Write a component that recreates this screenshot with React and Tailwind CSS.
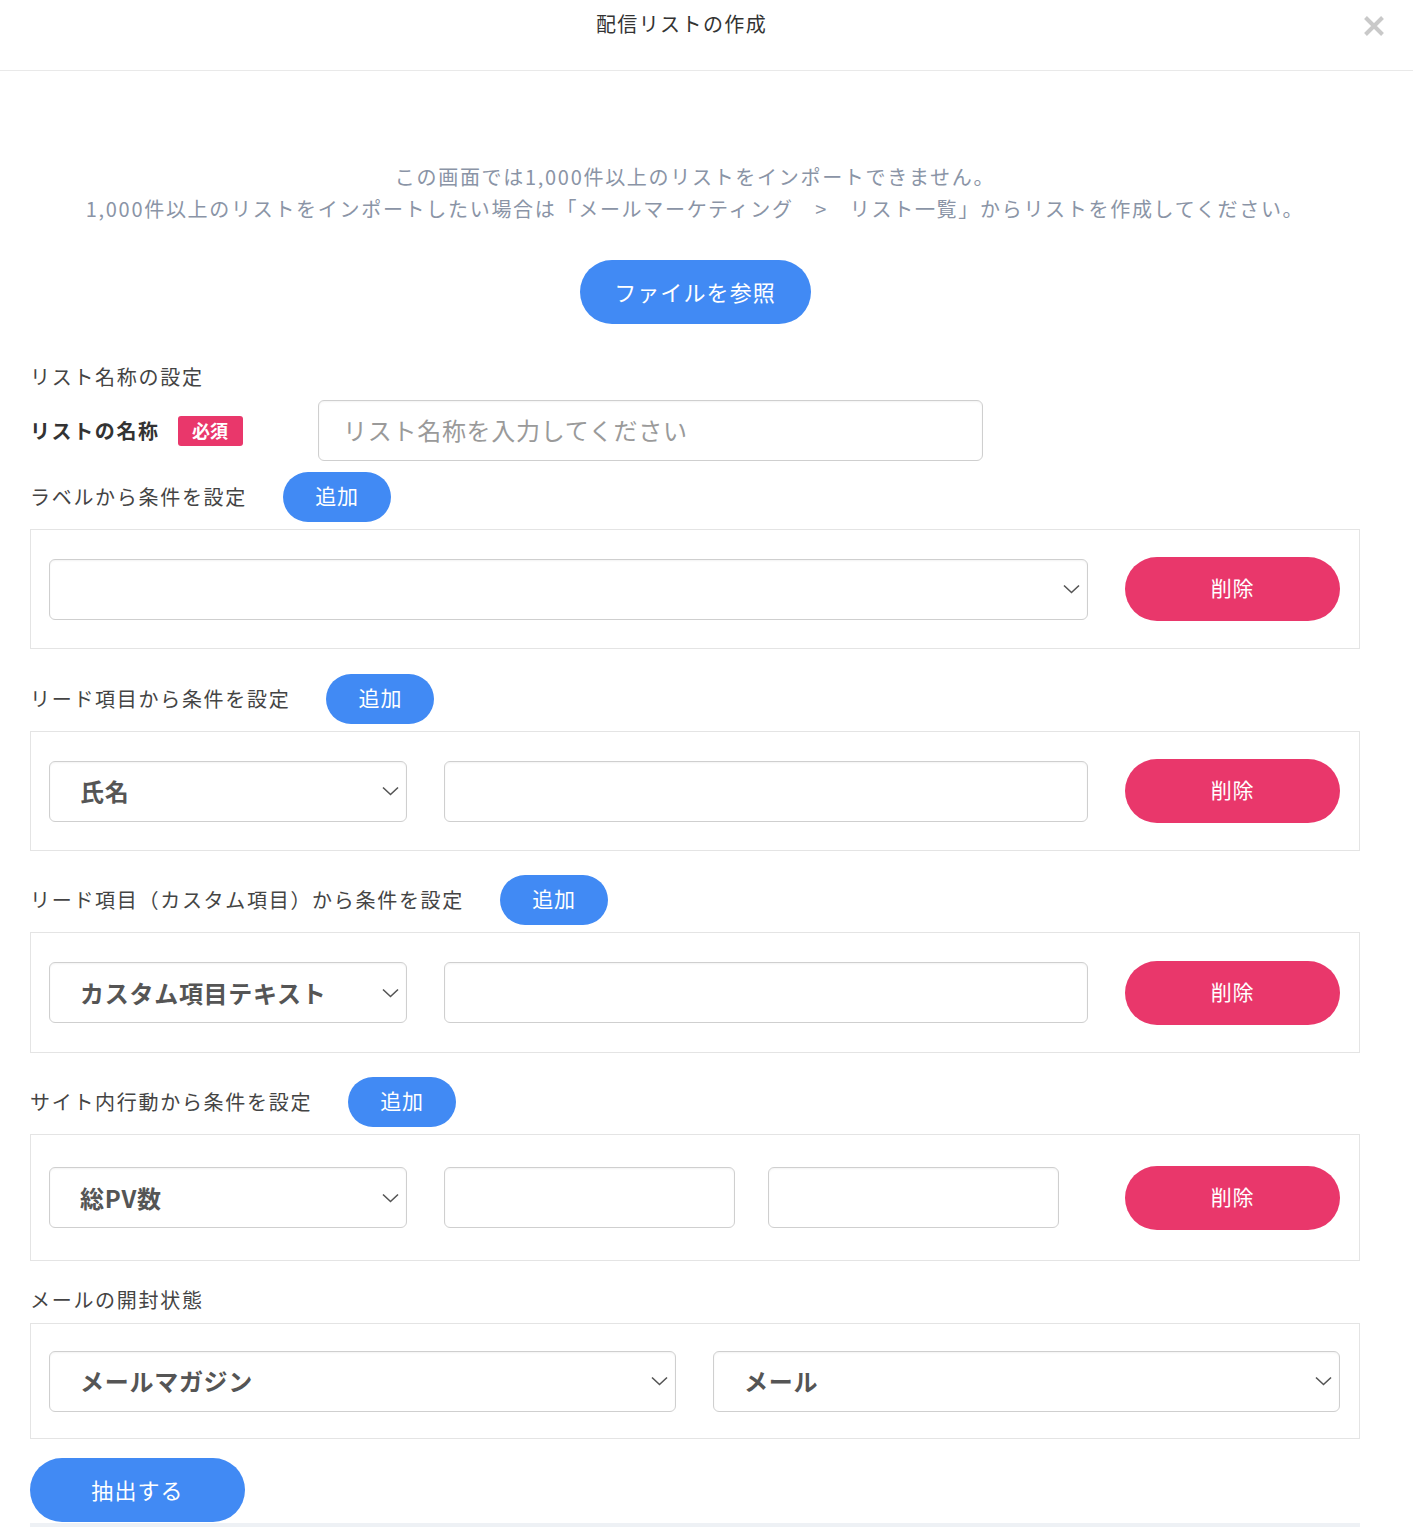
import React from "react";

const font = { fontFamily: '"Noto Sans CJK JP", "Noto Sans", sans-serif' };

// Dropdown chevron drawn as a thin V
function Chevron() {
  return (
    <svg width="17" height="10" viewBox="0 0 17 10" fill="none">
      <path d="M1 1.5 L8.5 8.5 L16 1.5" stroke="#555" strokeWidth="1.6" />
    </svg>
  );
}

function Select({ value, className = "" }) {
  return (
    <div className={"relative h-[61px] " + className}>
      <select
        defaultValue={value}
        className="h-full w-full appearance-none rounded-[6px] border border-[#cfcfcf] bg-white pl-[30px] pr-10 text-[24px] font-bold tracking-[0.03em] text-[#555] outline-none shadow-[inset_0_1px_2px_rgba(0,0,0,0.05)]"
        style={font}
      >
        <option value={value}>{value}</option>
      </select>
      <span className="pointer-events-none absolute right-[8px] top-1/2 -translate-y-1/2">
        <Chevron />
      </span>
    </div>
  );
}

function TextBox({ className = "" }) {
  return (
    <input
      type="text"
      className={
        "h-[61px] rounded-[6px] border border-[#cfcfcf] bg-white px-6 text-[22px] text-[#555] outline-none shadow-[inset_0_1px_2px_rgba(0,0,0,0.05)] " +
        className
      }
      style={font}
    />
  );
}

function AddButton() {
  return (
    <button className="h-[50px] w-[108px] rounded-full bg-[#418af4] pb-[2px] text-[21px] tracking-[0.04em] text-white">
      追加
    </button>
  );
}

function DeleteButton() {
  return (
    <button className="ml-auto h-[64px] w-[215px] shrink-0 rounded-full bg-[#e9376b] pb-[2px] text-[21px] tracking-[0.04em] text-white">
      削除
    </button>
  );
}

function SectionLabel({ children, withAdd = true }) {
  return (
    <div className="flex items-center gap-[36px]">
      <div className="text-[20px] leading-[32px] tracking-[0.085em] text-[#444]">{children}</div>
      {withAdd && <AddButton />}
    </div>
  );
}

function Panel({ children, height = "h-[120px]" }) {
  return (
    <div className={"mt-[7px] flex items-center gap-[37px] border border-[#e4e4e4] pl-[18px] pr-[19px] " + height}>
      {children}
    </div>
  );
}

export default function App() {
  return (
    <div className="min-h-screen bg-white" style={font}>
      {/* header */}
      <div className="flex h-[71px] items-start border-b border-[#e9e9e9]">
        <div className="flex-1 pt-[9px] text-center text-[20px] leading-[30px] tracking-[0.07em] text-[#333]">
          配信リストの作成
        </div>
        <button className="mr-[28px] mt-[15px] h-[22px] w-[22px]">
          <svg width="22" height="22" viewBox="0 0 22 22">
            <path d="M2.5 2.5 L19.5 19.5 M19.5 2.5 L2.5 19.5" stroke="#c9c9c9" strokeWidth="4" />
          </svg>
        </button>
      </div>

      <div className="pl-[30px] pr-[53px]">
        <div className="mt-[90px] text-center text-[20px] leading-[32px] tracking-[0.085em] text-[#8a94a6]">
          <p>この画面では1,000件以上のリストをインポートできません。</p>
          <p>
            1,000件以上のリストをインポートしたい場合は「メールマーケティング　&gt;　リスト一覧」からリストを作成してください。
          </p>
        </div>

        <div className="mt-[35px] flex justify-center">
          <button className="h-[64px] w-[231px] rounded-full bg-[#418af4] pb-[2px] text-[22px] tracking-[0.05em] text-white">
            ファイルを参照
          </button>
        </div>

        {/* list name */}
        <div className="mt-[37px] text-[20px] leading-[32px] tracking-[0.085em] text-[#444]">リスト名称の設定</div>
        <div className="mt-[7px] flex items-center">
          <div className="flex w-[288px] items-center gap-[18px]">
            <span className="text-[20px] font-bold tracking-[0.08em] text-[#333]">リストの名称</span>
            <span className="flex h-[30px] w-[65px] items-center justify-center rounded-[3px] bg-[#e9376b] text-[18px] font-bold text-white">
              必須
            </span>
          </div>
          <input
            type="text"
            placeholder="リスト名称を入力してください"
            className="h-[61px] w-[665px] rounded-[6px] border border-[#cfcfcf] px-6 pb-[2px] text-[24px] tracking-[0.03em] text-[#555] outline-none placeholder:text-[#9a9a9a] shadow-[inset_0_1px_2px_rgba(0,0,0,0.05)]"
            style={font}
          />
        </div>

        {/* label conditions */}
        <div className="mt-[11px]">
          <SectionLabel>ラベルから条件を設定</SectionLabel>
        </div>
        <Panel height="h-[120px]">
          <Select value="" className="flex-1" />
          <DeleteButton />
        </Panel>

        {/* lead fields */}
        <div className="mt-[25px]">
          <SectionLabel>リード項目から条件を設定</SectionLabel>
        </div>
        <Panel height="h-[120px]">
          <Select value="氏名" className="w-[358px] shrink-0" />
          <TextBox className="flex-1" />
          <DeleteButton />
        </Panel>

        {/* custom lead fields */}
        <div className="mt-[24px]">
          <SectionLabel>リード項目（カスタム項目）から条件を設定</SectionLabel>
        </div>
        <Panel height="h-[121px]">
          <Select value="カスタム項目テキスト" className="w-[358px] shrink-0" />
          <TextBox className="flex-1" />
          <DeleteButton />
        </Panel>

        {/* site activity */}
        <div className="mt-[24px]">
          <SectionLabel>サイト内行動から条件を設定</SectionLabel>
        </div>
        <Panel height="h-[127px]">
          <Select value="総PV数" className="w-[358px] shrink-0" />
          <TextBox className="w-[291px]" />
          <TextBox className="-ml-[4px] w-[291px]" />
          <DeleteButton />
        </Panel>

        {/* mail open state */}
        <div className="mt-[23px]">
          <SectionLabel withAdd={false}>メールの開封状態</SectionLabel>
        </div>
        <div className="mt-[2px]">
          <Panel height="h-[116px]">
            <Select value="メールマガジン" className="flex-1" />
            <Select value="メール" className="flex-1" />
          </Panel>
        </div>

        <button className="mt-[19px] h-[64px] w-[215px] rounded-full bg-[#418af4] pb-[2px] text-[22px] tracking-[0.05em] text-white">
          抽出する
        </button>
        <div className="mt-[1px] h-[4px] bg-[#eef1f5]" />
      </div>
    </div>
  );
}
